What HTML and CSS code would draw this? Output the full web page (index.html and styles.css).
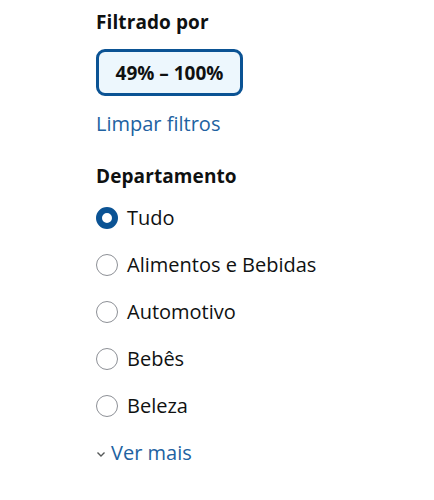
FILE: index.html
```html
<!DOCTYPE html>
<html lang="pt">
<head>
<meta charset="utf-8">
<link rel="stylesheet" href="styles.css">
</head>
<body>
<div class="panel">
  <h3 class="title">Filtrado por</h3>
  <div class="chip">49% – 100%</div>
  <a class="link clear">Limpar filtros</a>
  <h3 class="title dept">Departamento</h3>
  <ul class="options">
    <li class="opt"><span class="radio on"></span>Tudo</li>
    <li class="opt"><span class="radio"></span>Alimentos e Bebidas</li>
    <li class="opt"><span class="radio"></span>Automotivo</li>
    <li class="opt"><span class="radio"></span>Bebês</li>
    <li class="opt"><span class="radio"></span>Beleza</li>
  </ul>
  <a class="link more"><svg class="chev" width="10" height="7" viewBox="0 0 10 7"><path d="M1.5 1.5 L5 5 L8.5 1.5" fill="none" stroke="#565959" stroke-width="1.4"/></svg>Ver mais</a>
</div>
</body>
</html>
```
FILE: styles.css
```css
html, body { margin: 0; padding: 0; background: #fff; }
body { font-family: "Open Sans", "Noto Sans", sans-serif; color: #0f1111; }
.panel { padding: 8px 0 0 96px; display: flex; flex-direction: column; align-items: flex-start; }
.title { margin: 0; font-size: 19px; font-weight: 700; line-height: 28px; letter-spacing: 0.1px; }
.chip {
  margin-top: 13px;
  box-sizing: border-box;
  width: 147px; height: 47px;
  border: 3px solid #0b5394;
  border-radius: 9px;
  background: #edf7fd;
  font-weight: 700; font-size: 19px;
  display: flex; align-items: center; justify-content: center;
}
.link { color: #2162a1; font-size: 20px; line-height: 24px; text-decoration: none; }
.clear { margin-top: 16px; }
.dept { margin-top: 26px; }
.options { list-style: none; margin: 4px 0 0; padding: 0; display: flex; flex-direction: column; gap: 0; }
.opt { display: flex; align-items: center; gap: 9px; height: 47px; font-size: 20px; }
.radio { box-sizing: border-box; width: 22px; height: 22px; border-radius: 50%; border: 1.5px solid #8d9096; background: #fff; flex: none; }
.radio.on { border: 6px solid #0b5394; }
.more { display: flex; align-items: center; gap: 5px; margin-top: 12px; }
.chev { margin-top: 3px; }
```
